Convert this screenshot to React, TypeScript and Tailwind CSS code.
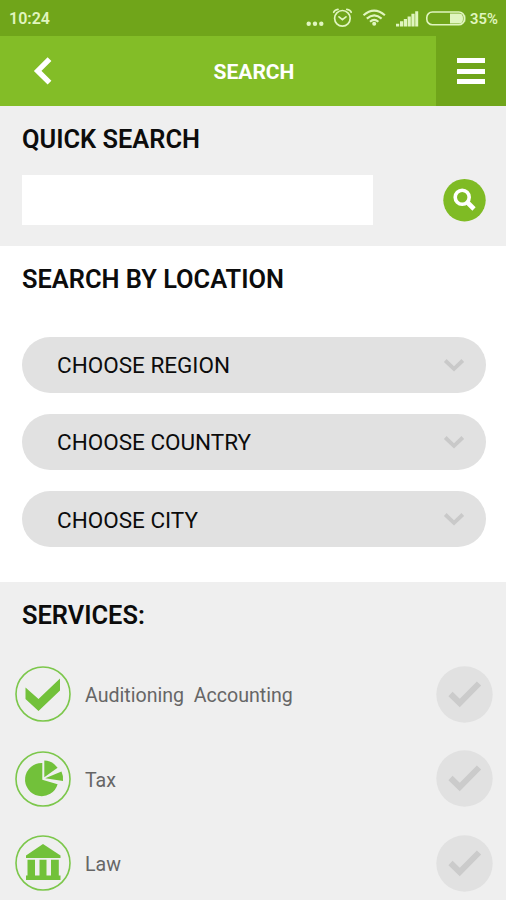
import type { ReactNode } from 'react';

interface Service {
  name: string;
  icon: ReactNode;
}

const locationFields = ['CHOOSE REGION', 'CHOOSE COUNTRY', 'CHOOSE CITY'];

const services: Service[] = [
  {
    name: 'Auditioning  Accounting',
    icon: <path d="M10.5 21.5 L23.5 33 L45 12.5 V24.5 L23.5 45 L10.5 33 Z" />,
  },
  {
    name: 'Tax',
    icon: (
      <>
        <path d="M27.3 12 V28.8 L42.6 33.2 A16.6 16.6 0 1 1 27.3 12 Z" />
        <path d="M29.3 9.5 A16.5 16.5 0 0 1 42.6 16.8 L29.3 26.2 Z" />
        <path d="M30.2 27.2 L46.5 20.5 A17 17 0 0 1 48 30 Z" />
      </>
    ),
  },
  {
    name: 'Law',
    icon: (
      <>
        <path d="M28 9 L45.5 20.5 V23 H11 V20.5 Z" />
        <path d="M12.5 24.8 H20 V40.5 H24.5 V24.8 H31.5 V40.5 H36 V24.8 H43.8 V40.5 H45.5 V45 H11 V40.5 H12.5 Z" />
      </>
    ),
  },
];

function StatusBar() {
  return (
    <div className="flex h-9 items-center bg-[#70a51a] pl-[9px] text-[#e0f5bf]">
      <span className="w-[294px] pt-[2px] text-[16px] font-semibold leading-none">10:24</span>
      <svg width="164" height="36" viewBox="303 0 164 36" fill="none">
        <g fill="currentColor">
          <circle cx="308.7" cy="23.7" r="2.2" />
          <circle cx="315" cy="23.7" r="2.2" />
          <circle cx="321.3" cy="23.7" r="2.2" />
        </g>
        {/* Alarm */}
        <g stroke="currentColor" strokeWidth="1.7" strokeLinecap="round">
          <circle cx="342.4" cy="18.3" r="7.8" />
          <path d="M339 16.8 L342.4 19.7 L346 16.8" />
          <path d="M333.7 12.3 Q334.5 9.7 338 9.3 M346.8 9.3 Q350.5 9.7 351.2 12.3" />
        </g>
        {/* Wifi */}
        <g stroke="currentColor" strokeWidth="2.1">
          <path d="M363.5 15.2 Q374.2 6 384.9 15.2" />
          <path d="M366.8 18.6 Q374.2 12.1 381.6 18.6" />
          <path d="M370 21.7 Q374.2 18.1 378.4 21.7" />
        </g>
        <circle cx="374.2" cy="23.8" r="2" fill="currentColor" />
        {/* Signal */}
        <path
          fill="currentColor"
          d="M396 23.8h3.2v2.7h-3.2z M400 21.3h3.2v5.2h-3.2z M403.8 19h3.2v7.5h-3.2z M407.6 16.5h3.2v10h-3.2z M411.4 13.8h3.2v12.7h-3.2z M415.2 11.2h3v15.3h-3z"
        />
        {/* Battery */}
        <rect x="426.8" y="12" width="37.6" height="12.8" rx="5.6" stroke="currentColor" strokeWidth="1.6" />
        <path d="M450 13.5 H459.5 Q463 13.5 463 18.4 Q463 23.4 459.5 23.4 H450 Z" fill="currentColor" />
        <path d="M464.6 15.5 V21.5" stroke="currentColor" strokeWidth="1.5" />
      </svg>
      <span className="ml-[3px] pt-[2px] text-[14.8px] font-semibold leading-none">35%</span>
    </div>
  );
}

function Header() {
  return (
    <header className="flex h-[70px] bg-[#83bd27] text-white">
      <button className="w-[72px]" aria-label="Back">
        <svg width="72" height="70" viewBox="0 0 72 70" fill="none">
          <path d="M49.5 23.2 L37.7 34.9 L49.5 46.6" stroke="currentColor" strokeWidth="5.4" />
        </svg>
      </button>
      <h1 className="flex-1 pt-[2px] text-center text-[21px] font-bold leading-[68px]">SEARCH</h1>
      <button className="flex w-[70px] flex-col items-center justify-center gap-[5.5px] bg-[#70a51a]" aria-label="Menu">
        <span className="h-[5px] w-7 bg-white" />
        <span className="h-[5px] w-7 bg-white" />
        <span className="h-[5px] w-7 bg-white" />
      </button>
    </header>
  );
}

function QuickSearch() {
  return (
    <section className="h-[140px] bg-[#efefef] px-[22px] pt-[17px]">
      <h2 className="text-[25.4px] font-semibold leading-8">QUICK SEARCH</h2>
      <div className="mt-5 flex items-center justify-between">
        <input type="text" className="h-[50px] w-[351px] bg-white px-3 text-[22px] outline-none" />
        <button className="-mr-0.5" aria-label="Search">
          <svg width="43" height="43" viewBox="0 0 43 43" className="block" fill="none">
            <circle cx="21.5" cy="21.2" r="21.2" fill="#7fbb24" />
            <circle cx="19.2" cy="18.3" r="7" stroke="#fff" strokeWidth="3.6" />
            <path d="M24 23 L31 30" stroke="#fff" strokeWidth="4.6" />
          </svg>
        </button>
      </div>
    </section>
  );
}

function LocationSearch() {
  return (
    <section className="h-[336px] bg-white pl-[22px] pr-5 pt-[17px]">
      <h2 className="text-[25.4px] font-semibold leading-8">SEARCH BY LOCATION</h2>
      <div className="mt-[41.5px] flex flex-col gap-[21.3px]">
        {locationFields.map((label) => (
          <button
            key={label}
            className="flex h-14 items-center justify-between rounded-full bg-[#e1e1e1] pl-[35px] pr-[21px] text-[22.5px]"
          >
            <span className="pt-[3px]">{label}</span>
            <svg width="22" height="14" viewBox="0 0 22 14" fill="none">
              <path d="M2.2 2.5 L11 10.8 L19.8 2.5" stroke="#c9c9c9" strokeWidth="3.8" />
            </svg>
          </button>
        ))}
      </div>
    </section>
  );
}

function ServiceRow({ service }: { service: Service }) {
  return (
    <div className="flex h-14 items-center">
      <svg width="56" height="56" viewBox="0 0 56 56" fill="#72c13a">
        <circle cx="28" cy="28" r="27" fill="none" stroke="#7cc74b" strokeWidth="1.6" />
        {service.icon}
      </svg>
      <span className="ml-3.5 flex-1 whitespace-pre pt-1 text-[19.6px] text-[#666]">{service.name}</span>
      <svg width="57" height="57" viewBox="0 0 57 57" fill="none">
        <circle cx="28.5" cy="28.5" r="28.2" fill="#e1e1e1" />
        <path d="M14.5 28 L23.7 37 L43 17.5" stroke="#cbcbcb" strokeWidth="6" />
      </svg>
    </div>
  );
}

export default function App() {
  return (
    <main className="flex h-[900px] w-[506px] flex-col overflow-hidden bg-white font-['Roboto',sans-serif] text-[#0c0c0c]">
      <StatusBar />
      <Header />
      <QuickSearch />
      <LocationSearch />
      <section className="flex-1 bg-[#efefef] pl-[15px] pr-[13px] pt-[17px]">
        <h2 className="pl-[7px] text-[25.4px] font-semibold leading-8">SERVICES:</h2>
        <div className="mt-[35px] flex flex-col gap-[28.5px]">
          {services.map((service) => (
            <ServiceRow key={service.name} service={service} />
          ))}
        </div>
      </section>
    </main>
  );
}
